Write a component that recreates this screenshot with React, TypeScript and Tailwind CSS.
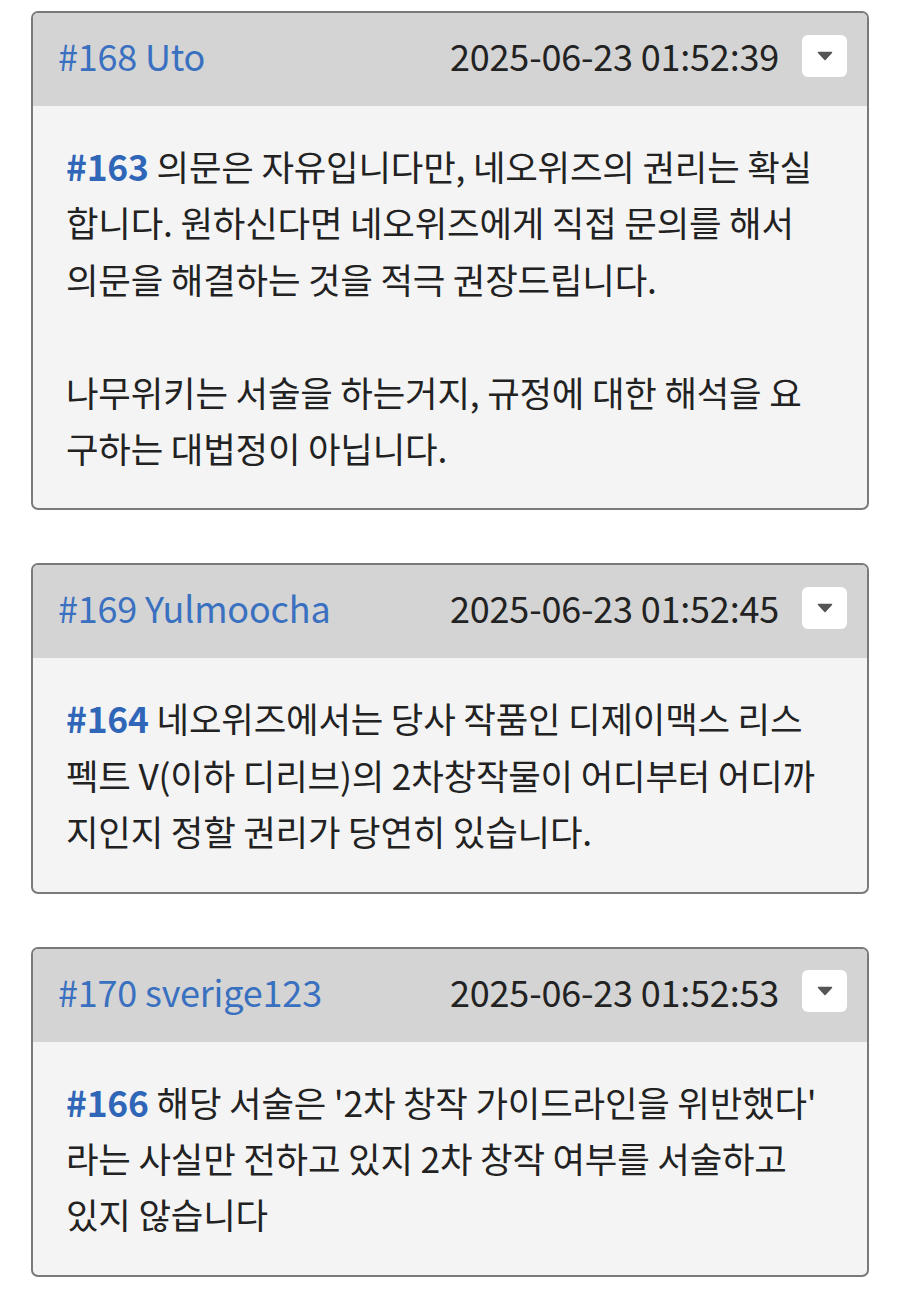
import { Fragment } from 'react';

type Comment = {
  id: number;
  author: string;
  time: string;
  replyTo: number;
  paragraphs: string[][];
};

const comments: Comment[] = [
  {
    id: 168,
    author: 'Uto',
    time: '2025-06-23 01:52:39',
    replyTo: 163,
    paragraphs: [
      [
        '의문은 자유입니다만, 네오위즈의 권리는 확실',
        '합니다. 원하신다면 네오위즈에게 직접 문의를 해서',
        '의문을 해결하는 것을 적극 권장드립니다.',
      ],
      ['나무위키는 서술을 하는거지, 규정에 대한 해석을 요', '구하는 대법정이 아닙니다.'],
    ],
  },
  {
    id: 169,
    author: 'Yulmoocha',
    time: '2025-06-23 01:52:45',
    replyTo: 164,
    paragraphs: [
      [
        '네오위즈에서는 당사 작품인 디제이맥스 리스',
        '펙트 V(이하 디리브)의 2차창작물이 어디부터 어디까',
        '지인지 정할 권리가 당연히 있습니다.',
      ],
    ],
  },
  {
    id: 170,
    author: 'sverige123',
    time: '2025-06-23 01:52:53',
    replyTo: 166,
    paragraphs: [
      [
        "해당 서술은 '2차 창작 가이드라인을 위반했다'",
        '라는 사실만 전하고 있지 2차 창작 여부를 서술하고',
        '있지 않습니다',
      ],
    ],
  },
];

function MenuButton() {
  return (
    <button className="flex h-[42px] w-[45px] items-center justify-center rounded-[6px] bg-white">
      <svg width="16" height="10" viewBox="0 0 16 10">
        <path
          d="M1.5 1.5h13l-6.5 7z"
          fill="#555555"
          stroke="#555555"
          strokeWidth="1.5"
          strokeLinejoin="round"
        />
      </svg>
    </button>
  );
}

function CommentCard({ c }: { c: Comment }) {
  return (
    <div className="overflow-hidden rounded-[7px] border-2 border-[#7a7a7a] bg-[#f4f4f4]">
      {/* Header */}
      <div className="flex h-[93px] items-center bg-[#d4d4d4] pb-[8px] pl-[25px] pr-[20px] text-[36px]">
        <a className="flex-1 text-[#3a70c0]">
          #{c.id} {c.author}
        </a>
        <span className="mr-[23px] text-[#222222]">{c.time}</span>
        <MenuButton />
      </div>

      {/* Body */}
      <div className="px-[33px] pt-[32px] pb-[32px] text-[35.4px] leading-[56.4px] text-[#222222]">
        {c.paragraphs.map((lines, pi) => (
          <p key={pi} className={pi > 0 ? 'mt-[56.4px]' : ''}>
            {pi === 0 && <span className="font-bold text-[#2f66b8]">#{c.replyTo} </span>}
            {lines.map((line, li) => (
              <Fragment key={li}>
                {li > 0 && <br />}
                {line}
              </Fragment>
            ))}
          </p>
        ))}
      </div>
    </div>
  );
}

export default function App() {
  return (
    <div
      className="min-h-[1299px] bg-white px-[31px] pt-[11px] leading-[57px] tracking-[-0.2px]"
      style={{ fontFamily: '"Noto Sans CJK KR", "Noto Sans", sans-serif' }}
    >
      <div className="flex flex-col gap-[53px]">
        {comments.map((c) => (
          <CommentCard key={c.id} c={c} />
        ))}
      </div>
    </div>
  );
}
